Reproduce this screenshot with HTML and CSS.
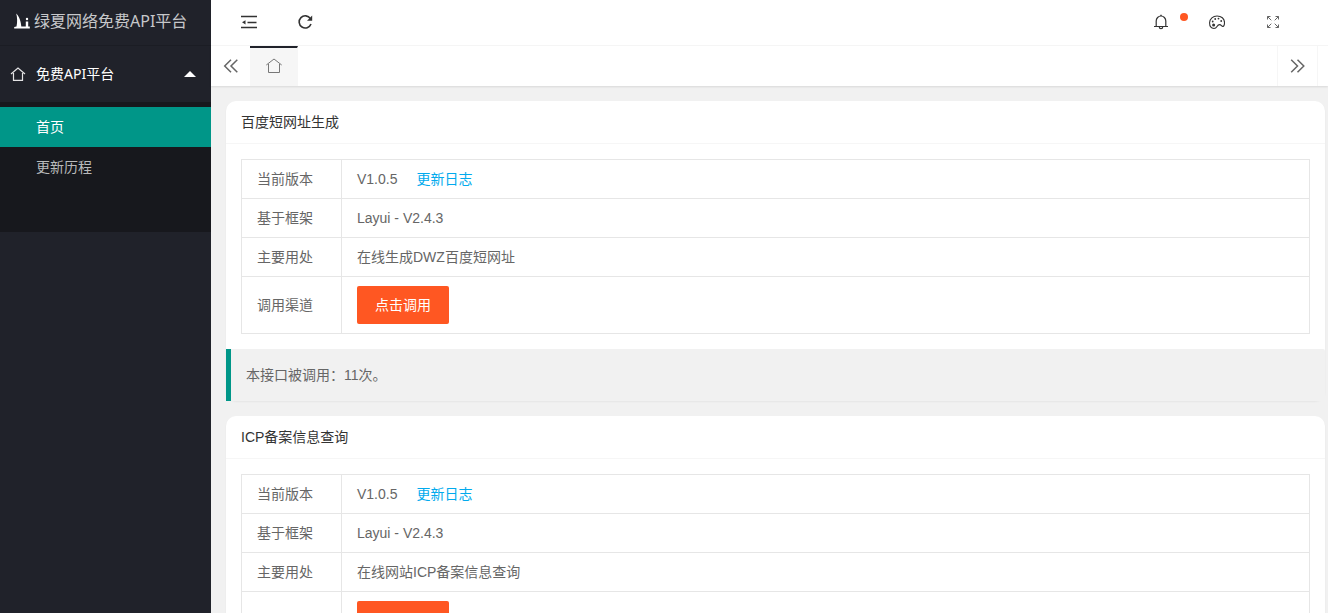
FILE: index.html
```html
<!DOCTYPE html>
<html lang="zh-CN">
<head>
<meta charset="utf-8">
<title>绿夏网络免费API平台</title>
<link rel="stylesheet" href="styles.css">
</head>
<body>
<div class="app">
  <aside class="side">
    <a class="logo" href="#">
      <svg class="logo-mark" viewBox="0 0 16 16" width="16" height="16" aria-hidden="true"><path d="M2.200 .5C5.500 3.500 7 9 7.300 13.600H11.800V8.400H14.200V13.600H15.800V15.500H.2V14L2.500 13.500C3.500 9 3.300 4 2.200 .5Z" fill="#fff"/><circle cx="13" cy="6" r="1.200" fill="#fff"/></svg>
      <span>绿夏网络免费API平台</span>
    </a>
    <nav>
      <button class="nav-head" type="button" aria-expanded="true">
        <svg viewBox="0 0 16 16" width="16" height="16" aria-hidden="true"><path d="M1 8 8 2 15 8M3.500 7V14.300H12.500V7" fill="none" stroke="#e4e4e5" stroke-width="1.200"/></svg>
        <span>免费API平台</span>
        <i class="caret"></i>
      </button>
      <div class="nav-child">
        <a class="active" href="#">首页</a>
        <a href="#">更新历程</a>
      </div>
    </nav>
  </aside>
  <div class="main">
    <header class="top">
      <button class="tool" type="button" aria-label="侧边伸缩"><svg viewBox="0 0 16 16" width="16" height="16"><path d="M0 2.500H16M6.500 8.500H15.500M0 13.500H16" stroke="#333" stroke-width="1.300"/><path d="M1 8.300 4.500 6.200V10.400Z" fill="#333"/></svg></button>
      <button class="tool" type="button" aria-label="刷新"><svg viewBox="0 0 16 16" width="16" height="16"><path d="M13.400 4.600A6.100 6.100 0 1 0 14 10" fill="none" stroke="#333" stroke-width="1.600"/><path d="M15.200 1.500V6.700H10Z" fill="#333"/></svg></button>
      <span class="space"></span>
      <button class="tool" type="button" aria-label="消息"><svg viewBox="0 0 16 16" width="16" height="16"><path d="M1 12.500H15M3.200 12V7A4.800 5 0 0 1 12.800 7V12M6.300 13Q6.300 14.700 8 14.700T9.700 13" fill="none" stroke="#333" stroke-width="1.200"/><path d="M7.300 .8H8.700V2H7.300Z" fill="#333"/></svg><i class="dot"></i></button>
      <button class="tool" type="button" aria-label="主题"><svg viewBox="0 0 16 16" width="16" height="16"><path d="M5 14.500C1.900 14.300 .5 11.700 .6 8.600C.8 4.600 4 2 8 2C12.300 2 15.500 4.600 15.500 8.500C15.500 10.500 15 12.600 13.800 12.400C12.500 12.200 12.200 10.500 10.500 10.600C7.500 10.800 8.500 14.500 5 14.500Z" fill="none" stroke="#333" stroke-width="1.100"/><g fill="#333"><circle cx="4.600" cy="11" r="1.500"/><circle cx="3.700" cy="7.500" r=".9"/><circle cx="6.200" cy="5" r=".9"/><circle cx="9.500" cy="4.600" r=".9"/><circle cx="12.200" cy="7" r=".9"/></g></svg></button>
      <button class="tool" type="button" aria-label="全屏"><svg viewBox="0 0 16 16" width="16" height="16"><path d="M2.500 5.500V2.500H5.500M2.500 2.500 6.300 6.300M10.500 2.500H13.500V5.500M13.500 2.500 9.700 6.300M2.500 10.500V13.500H5.500M2.500 13.500 6.300 9.700M10.500 13.500H13.500V10.500M13.500 13.500 9.700 9.700" fill="none" stroke="#666" stroke-width="1"/></svg></button>
    </header>
    <div class="tabs">
      <button class="tab-move" type="button" aria-label="向左"><svg viewBox="0 0 16 16" width="16" height="16"><path d="M8 1.700 1.700 8 8 14.300M14.300 1.700 8 8 14.300 14.300" fill="none" stroke="#666" stroke-width="1.500"/></svg></button>
      <button class="tab" type="button" aria-label="首页"><svg viewBox="0 0 16 16" width="16" height="16"><path d="M.3 7 8 1 15.700 7M2.500 6V14.500H13.500V6" fill="none" stroke="#777" stroke-width="1"/></svg></button>
      <span class="space"></span>
      <button class="tab-move tab-next" type="button" aria-label="向右"><svg viewBox="0 0 16 16" width="16" height="16"><path d="M1.200 1.700 7.500 8 1.200 14.300M7.500 1.700 13.800 8 7.500 14.300" fill="none" stroke="#666" stroke-width="1.500"/></svg></button>
    </div>
    <main class="content">
      <section class="card">
        <h2>百度短网址生成</h2>
        <div class="card-body">
          <table>
            <tr><th scope="row">当前版本</th><td>V1.0.5<a class="log" href="#">更新日志</a></td></tr>
            <tr><th scope="row">基于框架</th><td>Layui - V2.4.3</td></tr>
            <tr><th scope="row">主要用处</th><td>在线生成DWZ百度短网址</td></tr>
            <tr><th scope="row">调用渠道</th><td><a class="btn" href="#">点击调用</a></td></tr>
          </table>
        </div>
        <blockquote>本接口被调用：11次。</blockquote>
      </section>
      <section class="card">
        <h2>ICP备案信息查询</h2>
        <div class="card-body">
          <table>
            <tr><th scope="row">当前版本</th><td>V1.0.5<a class="log" href="#">更新日志</a></td></tr>
            <tr><th scope="row">基于框架</th><td>Layui - V2.4.3</td></tr>
            <tr><th scope="row">主要用处</th><td>在线网站ICP备案信息查询</td></tr>
            <tr><th scope="row">调用渠道</th><td><a class="btn" href="#">点击调用</a></td></tr>
          </table>
        </div>
      </section>
    </main>
  </div>
</div>
</body>
</html>
```
FILE: styles.css
```css
* {
  box-sizing: border-box;
}

body {
  margin: 0;
  background: #f1f1f1;
  color: #666;
  font: 14px/24px "Liberation Sans", "Noto Sans CJK SC", sans-serif;
}

a {
  color: inherit;
  text-decoration: none;
}

button {
  margin: 0;
  padding: 0;
  border: 0;
  background: none;
  font: inherit;
  color: inherit;
}

svg {
  display: block;
  flex: none;
}

.app {
  display: flex;
  height: 100vh;
  overflow: hidden;
}

.side {
  flex: none;
  width: 211px;
  background: #20222a;
  color: #fff;
  font-family: "Noto Sans", "Noto Sans CJK SC", sans-serif;
}

.logo {
  display: flex;
  align-items: center;
  gap: 4px;
  height: 46px;
  padding: 0 14px 4px;
  border-bottom: 1px solid #1b1d24;
  color: #c7c8ca;
  font-size: 16px;
  white-space: nowrap;
}

.nav-head {
  display: flex;
  align-items: center;
  gap: 10px;
  width: 100%;
  height: 56px;
  padding: 0 15px 0 10px;
}

.caret {
  margin-left: auto;
  border: 6px solid transparent;
  border-top: 0;
  border-bottom-color: #fff;
}

.nav-child {
  padding: 5px 0 45px;
  background: #17181d;
}

.nav-child a {
  display: block;
  padding-left: 36px;
  color: #b9babb;
  line-height: 40px;
}

.nav-child .active {
  background: #009688;
  color: #fff;
}

.main {
  display: flex;
  flex: 1;
  flex-direction: column;
  min-width: 0;
}

.top {
  display: flex;
  height: 46px;
  padding: 0 27px 0 10px;
  border-bottom: 1px solid #f6f6f6;
  background: #fff;
}

.tool {
  position: relative;
  display: grid;
  width: 56px;
  padding-bottom: 2px;
  place-items: center;
}

.dot {
  position: absolute;
  top: 13px;
  right: 1px;
  width: 8px;
  height: 8px;
  border-radius: 50%;
  background: #ff5722;
}

.space {
  flex: 1;
}

.tabs {
  display: flex;
  flex: none;
  height: 40px;
  padding-right: 10px;
  background: #fff;
  box-shadow: 0 1px 2px rgba(0, 0, 0, .1);
}

.tab-move {
  display: grid;
  width: 39px;
  place-items: center;
}

.tab {
  display: grid;
  width: 48px;
  padding-bottom: 2px;
  border-top: 2px solid #20222a;
  border-right: 1px solid #f6f6f6;
  background: #f6f6f6;
  place-items: center;
}

.tab-next {
  width: 41px;
  border: solid #f6f6f6;
  border-width: 0 1px;
}

.content {
  flex: 1;
  min-height: 0;
  padding: 15px 3px 0 15px;
  overflow: hidden;
}

.card {
  margin-bottom: 15px;
  border-radius: 10px;
  background: #fff;
  box-shadow: 0 1px 2px rgba(0, 0, 0, .05);
}

.card h2 {
  margin: 0;
  padding: 0 15px;
  border-bottom: 1px solid #f6f6f6;
  color: #333;
  font-size: 14px;
  font-weight: 400;
  line-height: 42px;
}

.card-body {
  padding: 15px;
}

table {
  width: 100%;
  border-collapse: collapse;
}

th,
td {
  padding: 9px 15px;
  border: 1px solid #e6e6e6;
  font-weight: 400;
  line-height: 20px;
  text-align: left;
}

th {
  width: 100px;
}

.log {
  padding-left: 19px;
  color: #01aaed;
}

.btn {
  display: block;
  width: fit-content;
  padding: 0 18px;
  border-radius: 2px;
  background: #ff5722;
  color: #fff;
  line-height: 38px;
}

blockquote {
  margin: 0;
  padding: 15px;
  border-left: 5px solid #009688;
  border-radius: 0 2px 2px 0;
  background: #f1f1f1;
  line-height: 22px;
}
```
